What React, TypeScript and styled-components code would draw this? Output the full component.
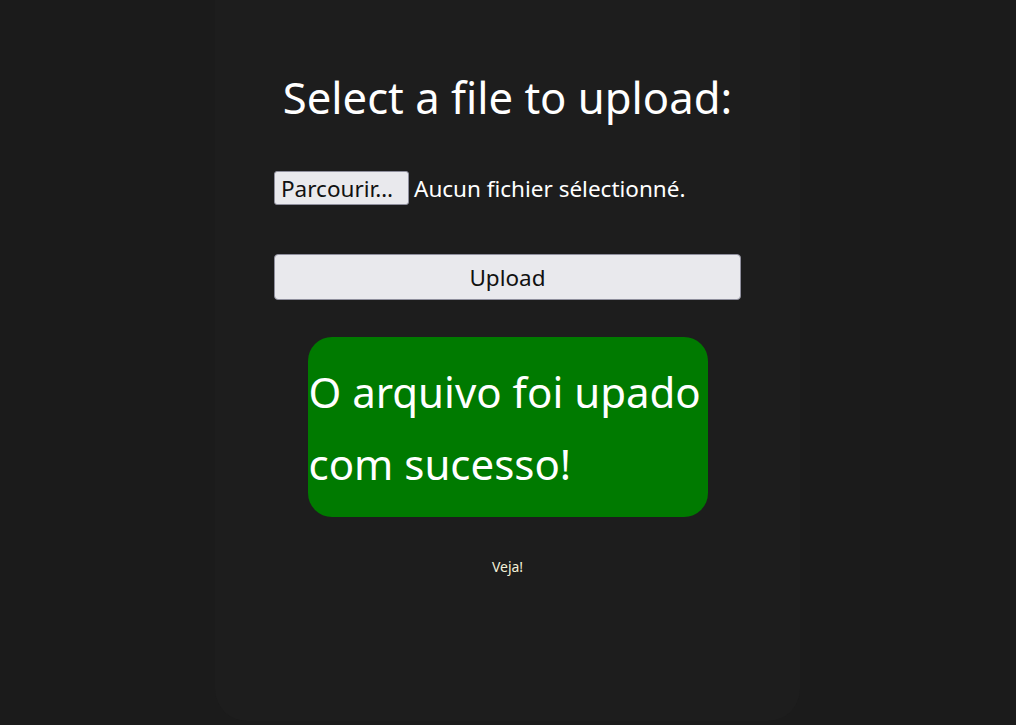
import React from "react";
import styled, { createGlobalStyle } from "styled-components";

const Global = createGlobalStyle`
  html, body { margin: 0; padding: 0; background: #1b1b1b; }
  body { font-family: "Noto Sans", "DejaVu Sans", sans-serif; color: #ffffff; }
`;

const Page = styled.div`
  min-height: 725px;
  display: flex;
  justify-content: center;
`;

const Panel = styled.main`
  width: 585px;
  height: 721px;
  margin-left: -1px;
  background: #1d1d1d;
  border-radius: 0 0 32px 32px;
  display: flex;
  flex-direction: column;
  align-items: center;
  box-sizing: border-box;
  padding-top: 67px;
`;

const Title = styled.h1`
  margin: 0;
  font-size: 43.6px;
  font-weight: 400;
  line-height: 60px;
`;

const Form = styled.form`
  width: 467px;
  margin-top: 44px;
  display: flex;
  flex-direction: column;
`;

const FileRow = styled.div`
  display: flex;
  align-items: center;
  gap: 5px;
  height: 34px;
`;

const BrowseButton = styled.button`
  height: 34px;
  width: 135px;
  padding: 0 6px;
  text-align: left;
  font-family: inherit;
  font-size: 22.5px;
  color: #111;
  background: #e9e9ed;
  border: 1px solid #8f8f9d;
  border-radius: 3px;
  white-space: nowrap;
`;

const FileName = styled.span`
  font-size: 22.5px;
  color: #fff;
`;

const UploadButton = styled.button`
  margin-top: 49px;
  height: 46px;
  width: 100%;
  font-family: inherit;
  font-size: 22.5px;
  color: #111;
  background: #e9e9ed;
  border: 1px solid #8f8f9d;
  border-radius: 4px;
`;

const Success = styled.div`
  margin-top: 37px;
  width: 400px;
  height: 180px;
  box-sizing: border-box;
  padding: 19px 0 17px 1px;
  background: #007a00;
  border-radius: 24px;
  font-size: 42px;
  line-height: 72px;
  color: #fff;
`;

const Link = styled.a`
  margin-top: 40px;
  font-size: 14px;
  color: #f3f0d8;
  text-decoration: none;
`;

export default function App() {
  return (
    <>
      <Global />
      <Page>
        <Panel>
          <Title>Select a file to upload:</Title>
          <Form onSubmit={(e) => e.preventDefault()}>
            <FileRow>
              <BrowseButton type="button">Parcourir…</BrowseButton>
              <FileName>Aucun fichier sélectionné.</FileName>
            </FileRow>
            <UploadButton type="submit">Upload</UploadButton>
          </Form>
          <Success>O arquivo foi upado com sucesso!</Success>
          <Link href="#">Veja!</Link>
        </Panel>
      </Page>
    </>
  );
}
